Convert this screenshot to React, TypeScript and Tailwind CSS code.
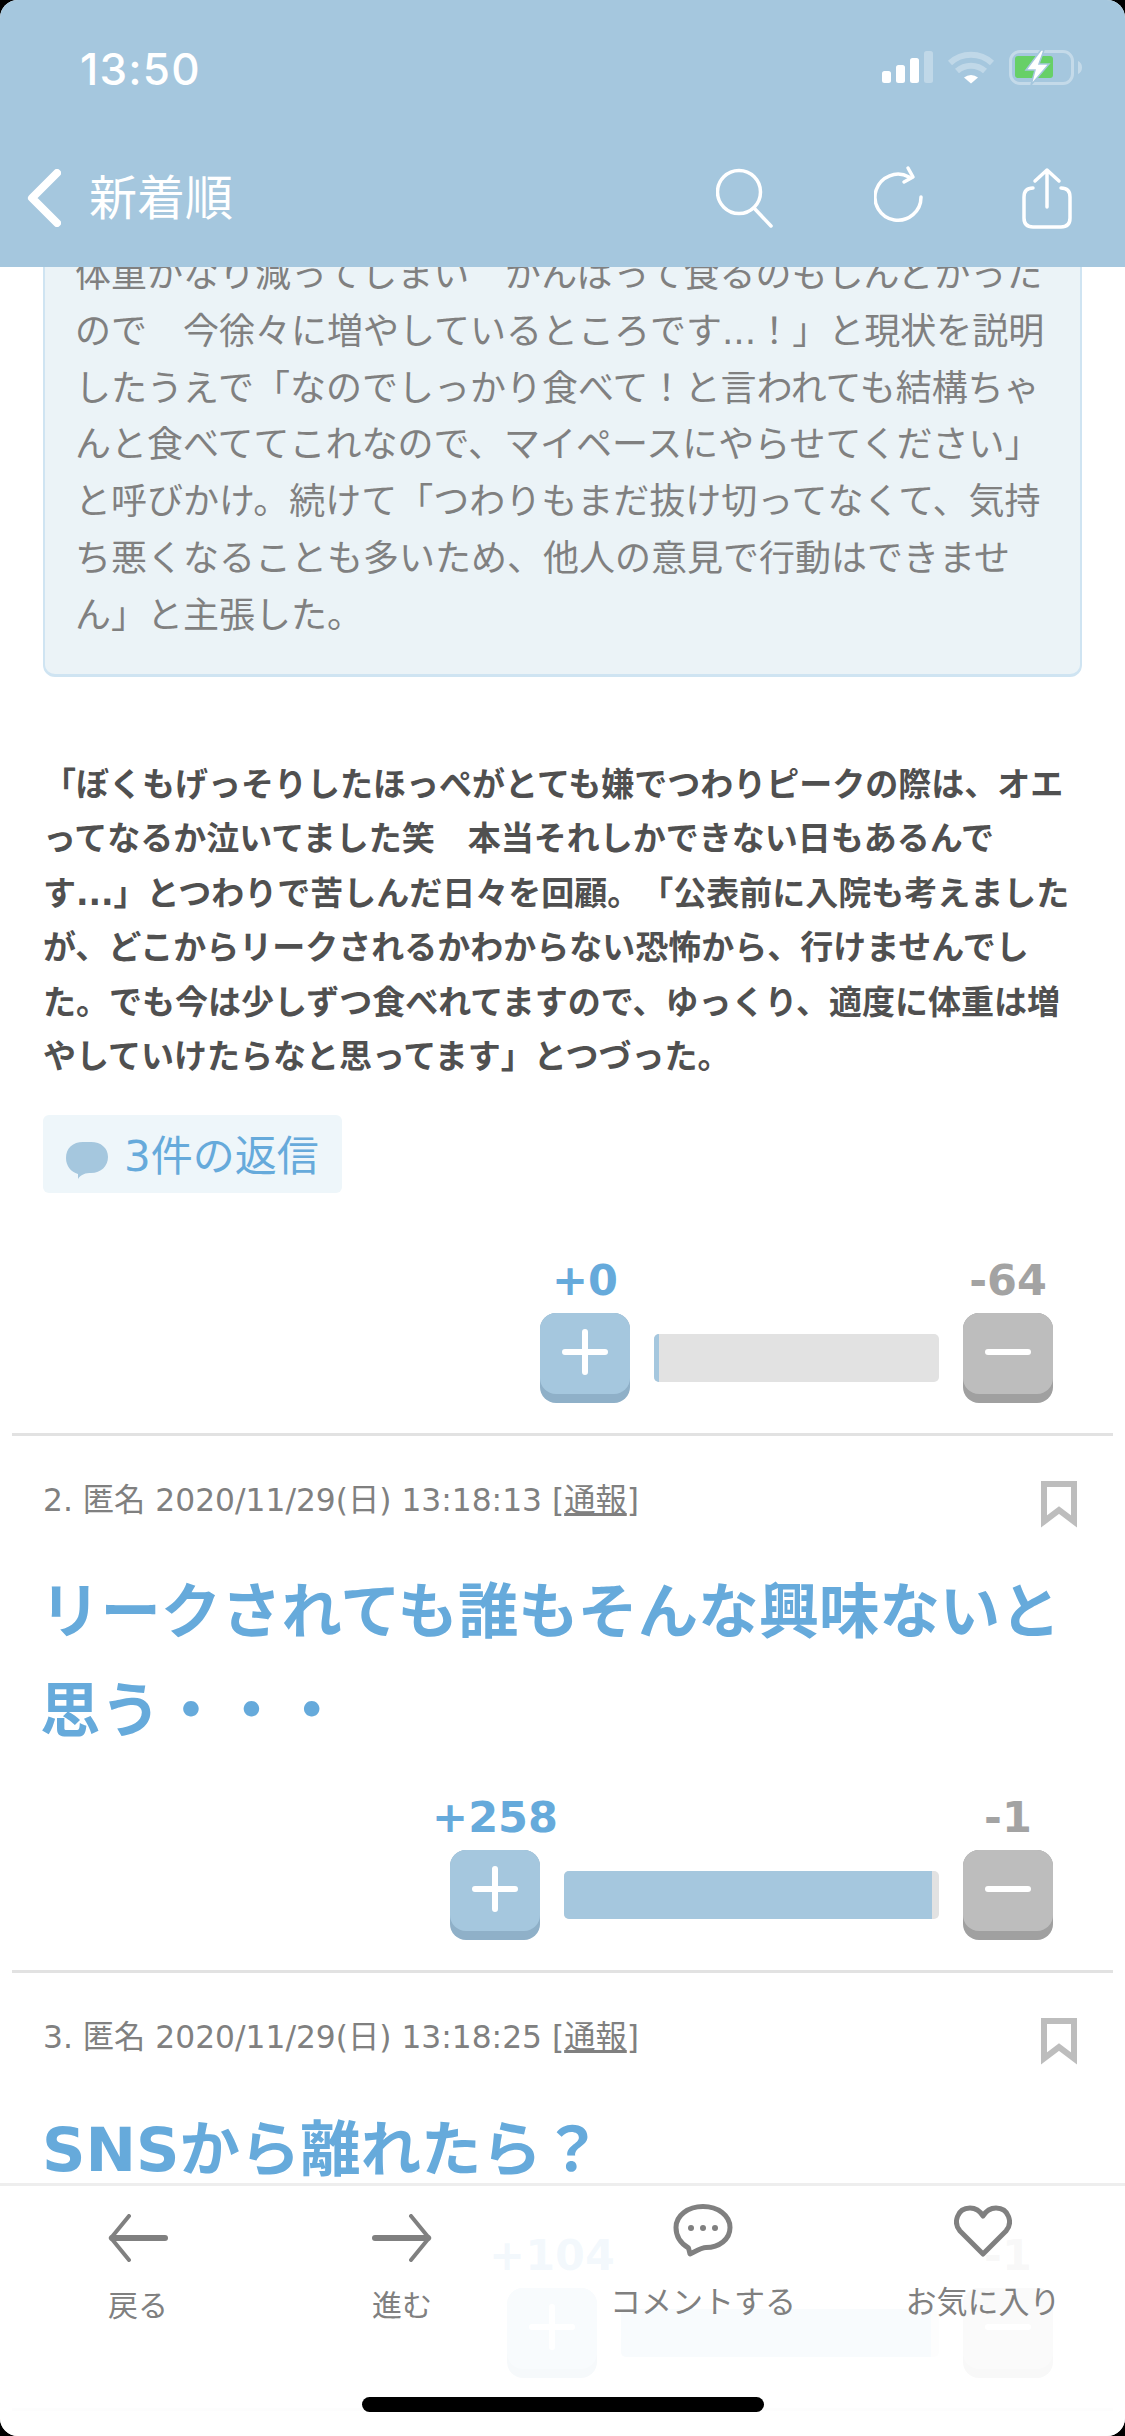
function Vote({ up, down, barClass, fillClass }: { up: string; down: string; barClass: string; fillClass: string }) {
  return (
    <div className="flex justify-end items-end pr-[72px]">
      <div className="w-[90px] flex flex-col items-center">
        <div className="h-[50px] leading-[50px] mb-2 text-[43px] font-bold text-[#66aadb] whitespace-nowrap">{up}</div>
        <div className="w-[90px] h-[90px] rounded-[16px] bg-[#8fb0c8]">
          <div className="w-[90px] h-[81px] rounded-[16px] bg-[#a5c7de] flex items-center justify-center pb-[3px]">
            <svg width="46" height="46" viewBox="0 0 46 46" fill="none" stroke="#fff" strokeWidth="6" strokeLinecap="round">
              <path d="M3 23h40M23 3v40" />
            </svg>
          </div>
        </div>
      </div>
      <div className={`${barClass} h-[48px] mx-6 mb-[21px] rounded-[5px] bg-[#e2e2e2] overflow-hidden`}>
        <div className={`${fillClass} h-full bg-[#a5c7de]`} />
      </div>
      <div className="w-[90px] flex flex-col items-center">
        <div className="h-[50px] leading-[50px] mb-2 text-[43px] font-bold text-[#a3a3a3] whitespace-nowrap">{down}</div>
        <div className="w-[90px] h-[90px] rounded-[16px] bg-[#a0a0a0]">
          <div className="w-[90px] h-[81px] rounded-[16px] bg-[#bdbdbd] flex items-center justify-center pb-[3px]">
            <svg width="46" height="8" viewBox="0 0 46 8" fill="none" stroke="#fff" strokeWidth="6" strokeLinecap="round">
              <path d="M3 4h40" />
            </svg>
          </div>
        </div>
      </div>
    </div>
  )
}

function Meta({ no, time }: { no: string; time: string }) {
  return (
    <div className="mt-[45px] h-[47px] pl-[43px] pr-[48px] flex justify-between items-start">
      <span className="text-[31.300px] leading-[38px] text-[#808080] whitespace-nowrap">
        {no}. 匿名 2020/11/29(日) {time} [<span className="underline">通報</span>]
      </span>
      <svg width="36" height="47" viewBox="0 0 36 47" fill="none" stroke="#bdbdbd" strokeWidth="6">
        <path d="M3 3h30v37.5L18 29 3 40.5z" />
      </svg>
    </div>
  )
}

function Divider() {
  return <div className="mx-3 mt-[30px] h-[3px] bg-[#e2e2e2]" />
}

function StatusIcons() {
  return (
    <svg width="200" height="36" viewBox="0 0 200 36" fill="none">
      <rect x="0" y="21" width="9" height="12" rx="2.5" fill="#fff" />
      <rect x="14" y="15" width="9" height="18" rx="2.5" fill="#fff" />
      <rect x="28" y="8" width="9" height="25" rx="2.5" fill="#fff" />
      <rect x="42" y="1" width="9" height="32" rx="2.5" fill="#fff" fillOpacity="0.3" />
      <path d="M68 13a31 31 0 0 1 42 0M75 21a21 21 0 0 1 28 0" stroke="#fff" strokeOpacity="0.3" strokeWidth="6" />
      <path d="M82 27.500a11 11 0 0 1 14 0L89 33.500z" fill="#fff" />
      <rect x="128.500" y="1.500" width="62" height="32" rx="9.500" stroke="#fff" strokeOpacity="0.35" strokeWidth="3" />
      <path d="M196 11c2.500 1 4 3.500 4 6.500s-1.500 5.500-4 6.500z" fill="#fff" fillOpacity="0.35" />
      <rect x="133" y="6" width="38" height="22" rx="3" fill="#67d067" />
      <path d="M159 0l-15 20h9l-4 15 18-21h-10l5-14z" fill="#fff" stroke="#a5c7de" strokeWidth="1.500" />
    </svg>
  )
}

export default function App() {
  return (
    <div className="w-[1125px] h-[2436px] bg-black font-['DejaVu_Sans','Noto_Sans_CJK_JP',sans-serif] [text-spacing-trim:space-all]">
      <div className="relative w-full h-full rounded-[18px] bg-white overflow-hidden">
        <header className="relative z-10 h-[267px] bg-[#a5c7de] text-white">
          <div className="flex justify-between pl-[80px] pr-[43px] pt-[50px] h-[118px]">
            <span className="font-['Inter',sans-serif] font-medium text-[44px] leading-[38px] tracking-[1.2px]">13:50</span>
            <StatusIcons />
          </div>
          <div className="flex items-center h-[60px] mt-[50px] pl-[27px]">
            <svg width="34" height="58" viewBox="0 0 34 58" fill="none" stroke="#fff" strokeWidth="8" strokeLinecap="round" strokeLinejoin="round">
              <path d="M30 4L5 29l25 25" />
            </svg>
            <span className="ml-[28px] text-[48px] leading-[60px]">新着順</span>
            <svg className="ml-[483px]" width="58" height="60" viewBox="0 0 58 60" fill="none" stroke="#fff" strokeWidth="3.500" strokeLinecap="round">
              <circle cx="23" cy="24" r="21.500" />
              <path d="M38 40l17 18" />
            </svg>
            <svg className="ml-[100px] -mt-[8px]" width="52" height="58" viewBox="0 0 52 58" fill="none" stroke="#fff" strokeWidth="3.500" strokeLinecap="round" strokeLinejoin="round">
              <path d="M47 32a23 23 0 1 1-12-20" />
              <path d="M34 3l5 9-9 5" />
            </svg>
            <svg className="ml-[96px]" width="50" height="62" viewBox="0 0 50 62" fill="none" stroke="#fff" strokeWidth="3.500" strokeLinecap="round" strokeLinejoin="round">
              <path d="M11 21C5 21 2 24 2 30v21c0 6 3 9 9 9h28c6 0 9-3 9-9V30c0-6-3-9-9-9" />
              <path d="M25 40V3M13 14L25 3l12 11" />
            </svg>
          </div>
        </header>

        <main>
          <div className="mx-[43px] -mt-[52px] pt-[30px] pb-[29px] pl-[30px] border-2 border-b-[3px] border-[#cfe4f2] rounded-[12px] bg-[#ebf3f7] text-[36px] leading-[56.800px] text-[#808080] whitespace-nowrap">
            体重かなり減ってしまい　がんばって食るのもしんどかった<br />
            ので　今徐々に増やしているところです...！」と現状を説明<br />
            したうえで「なのでしっかり食べて！と言われても結構ちゃ<br />
            んと食べててこれなので、マイペースにやらせてください」<br />
            と呼びかけ。続けて「つわりもまだ抜け切ってなくて、気持<br />
            ち悪くなることも多いため、他人の意見で行動はできませ<br />
            ん」と主張した。
          </div>

          <p className="mt-[81px] pl-[43px] text-[33px] leading-[54.500px] font-bold text-[#505050] whitespace-nowrap">
            「ぼくもげっそりしたほっぺがとても嫌でつわりピークの際は、オエ<br />
            ってなるか泣いてました笑　本当それしかできない日もあるんで<br />
            す...」とつわりで苦しんだ日々を回顧。「公表前に入院も考えました<br />
            が、どこからリークされるかわからない恐怖から、行けませんでし<br />
            た。でも今は少しずつ食べれてますので、ゆっくり、適度に体重は増<br />
            やしていけたらなと思ってます」とつづった。
          </p>

          <div className="mt-[30px] ml-[43px] w-[299px] h-[78px] rounded-[6px] bg-[#eef6fa] flex items-center pl-[23px]">
            <svg width="42" height="37" viewBox="0 0 42 37" className="mt-[14px]">
              <path d="M17 0h8c10 0 17 6 17 15s-7 16-17 16c-5 0-10 1-13 6v-5C5 30 0 24 0 16 0 6 7 0 17 0z" fill="#a5c7de" />
            </svg>
            <span className="ml-[16px] mt-[6px] text-[42px] leading-[50px] text-[#66aadb]">3件の返信</span>
          </div>

          <div className="mt-[62px]">
            <Vote up="+0" down="-64" barClass="w-[285px]" fillClass="w-[5px]" />
          </div>
          <Divider />

          <Meta no="2" time="13:18:13" />
          <h2 className="mt-[35px] pl-[40px] text-[60.400px] leading-[99px] font-bold text-[#66aadb] whitespace-nowrap">
            リークされても誰もそんな興味ないと<br />
            思う・・・
          </h2>
          <div className="mt-[31px]">
            <Vote up="+258" down="-1" barClass="w-[375px]" fillClass="w-[368px]" />
          </div>
          <Divider />

          <Meta no="3" time="13:18:25" />
          <h2 className="mt-[36px] pl-[42px] text-[60.400px] leading-[99px] font-bold text-[#66aadb] whitespace-nowrap">
            SNSから離れたら？
          </h2>
          <div className="mt-[30px]">
            <Vote up="+104" down="-1" barClass="w-[318px]" fillClass="w-[310px]" />
          </div>
          <Divider />
        </main>

        <nav className="absolute left-0 right-0 bottom-0 h-[253px] bg-white/[0.92] border-t-[3px] border-[#eeeeee] flex items-start pl-[78px] text-[30px] leading-[40px] text-[#808080] whitespace-nowrap">
          <div className="w-[120px] flex flex-col items-center pt-[28px]">
            <svg width="60" height="48" viewBox="0 0 60 48" fill="none" stroke="#808080" strokeLinecap="round">
              <path d="M4 24h53" strokeWidth="6" />
              <path d="M21 2L3 24l18 22" strokeWidth="4" />
            </svg>
            <span className="mt-[24px]">戻る</span>
          </div>
          <div className="ml-[144px] w-[120px] flex flex-col items-center pt-[28px]">
            <svg width="60" height="48" viewBox="0 0 60 48" fill="none" stroke="#808080" strokeLinecap="round">
              <path d="M3 24h53" strokeWidth="6" />
              <path d="M39 2l18 22-18 22" strokeWidth="4" />
            </svg>
            <span className="mt-[24px]">進む</span>
          </div>
          <div className="ml-[151px] w-[180px] flex flex-col items-center pt-[18px]">
            <svg width="60" height="53" viewBox="0 0 60 53" fill="none" stroke="#808080" strokeWidth="5" strokeLinejoin="round">
              <path d="M30 2.500c15 0 27 9 27 21s-11 20-24 20c-4 0-9 3-16 6.500l-1.500-6C7 39 3 32 3 23.500c0-12 12-21 27-21z" />
              <circle cx="18" cy="24" r="3" fill="#808080" stroke="none" />
              <circle cx="30" cy="24" r="3" fill="#808080" stroke="none" />
              <circle cx="42" cy="24" r="3" fill="#808080" stroke="none" />
            </svg>
            <span className="mt-[25px] text-[31px]">コメントする</span>
          </div>
          <div className="ml-[117px] w-[146px] flex flex-col items-center pt-[19px]">
            <svg width="58" height="52" viewBox="0 0 58 52" fill="none" stroke="#808080" strokeWidth="5" strokeLinejoin="round">
              <path d="M29 49L6 26C-1 18 3 3 16 3c6 0 10 3 13 8 3-5 7-8 13-8 13 0 17 15 10 23z" />
            </svg>
            <span className="mt-[25px] text-[31px]">お気に入り</span>
          </div>
          <div className="absolute left-[362px] bottom-[24px] w-[402px] h-[15px] rounded-full bg-black" />
        </nav>
      </div>
    </div>
  )
}
